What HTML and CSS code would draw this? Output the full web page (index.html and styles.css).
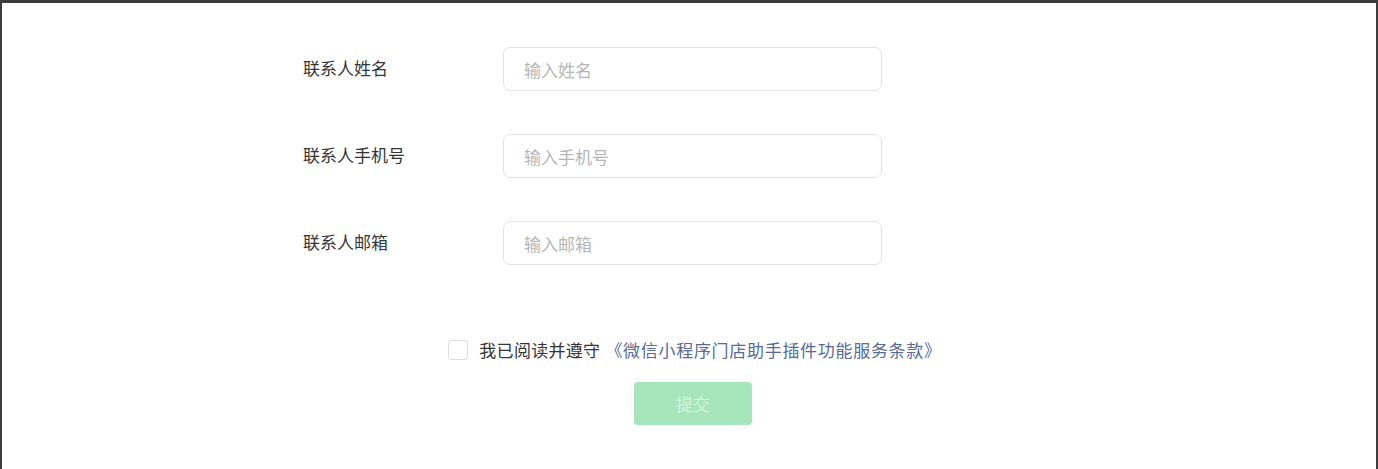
FILE: index.html
```html
<!DOCTYPE html>
<html lang="zh-CN">
<head>
<meta charset="utf-8">
<title>联系人信息</title>
<link rel="stylesheet" href="styles.css">
</head>
<body>
<div class="frame">
  <main class="page">
    <form class="form">
      <div class="row">
        <label class="label">联系人姓名</label>
        <input class="input" type="text" placeholder="输入姓名">
      </div>
      <div class="row">
        <label class="label">联系人手机号</label>
        <input class="input" type="text" placeholder="输入手机号">
      </div>
      <div class="row">
        <label class="label">联系人邮箱</label>
        <input class="input" type="text" placeholder="输入邮箱">
      </div>
    </form>
    <div class="agree">
      <span class="checkbox"></span>
      <span class="agree-text">我已阅读并遵守</span>
      <a class="link">《微信小程序门店助手插件功能服务条款》</a>
    </div>
    <div class="actions">
      <button class="submit" type="button">提交</button>
    </div>
  </main>
</div>
</body>
</html>
```

FILE: styles.css
```css
* { box-sizing: border-box; }
html, body { margin: 0; padding: 0; height: 100%; }
body {
  background: #3c3c3c;
  font-family: "Noto Sans CJK SC", "Noto Sans", sans-serif;
  color: #353535;
}
.frame {
  height: 100%;
  padding: 3px 2px 0 2px;
}
.page {
  background: #ffffff;
  height: 100%;
  padding-top: 44px;
}
.form {
  display: flex;
  flex-direction: column;
  gap: 43px;
  padding-left: 301px;
}
.row {
  display: flex;
  align-items: center;
  height: 44px;
}
.label {
  width: 200px;
  font-size: 17px;
  line-height: 24px;
  color: #353535;
  margin-top: -2px;
}
.input {
  width: 379px;
  height: 44px;
  border: 1px solid #e3e3e3;
  border-radius: 7px;
  padding: 0 20px;
  font-family: inherit;
  font-size: 17px;
  color: #353535;
  outline: none;
  background: #fff;
}
.input::placeholder { color: #b6b6b6; }
.agree {
  display: flex;
  align-items: center;
  justify-content: center;
  margin-top: 73px;
  height: 24px;
  font-size: 17px;
  line-height: 24px;
  padding-left: 12px;
}
.checkbox {
  width: 20px;
  height: 20px;
  border: 1px solid #dedede;
  border-radius: 3px;
  margin-right: 11px;
  background: #fff;
}
.agree-text { color: #353535; letter-spacing: 0.3px; }
.link {
  color: #576b95;
  margin-left: 5px;
  letter-spacing: 0.7px;
}
.actions {
  display: flex;
  justify-content: center;
  margin-top: 20px;
  padding-left: 8px;
}
.submit {
  width: 118px;
  height: 43px;
  border: none;
  border-radius: 4px;
  background: #a6e6ba;
  color: #d3f3dd;
  font-family: inherit;
  font-size: 17px;
}
```
